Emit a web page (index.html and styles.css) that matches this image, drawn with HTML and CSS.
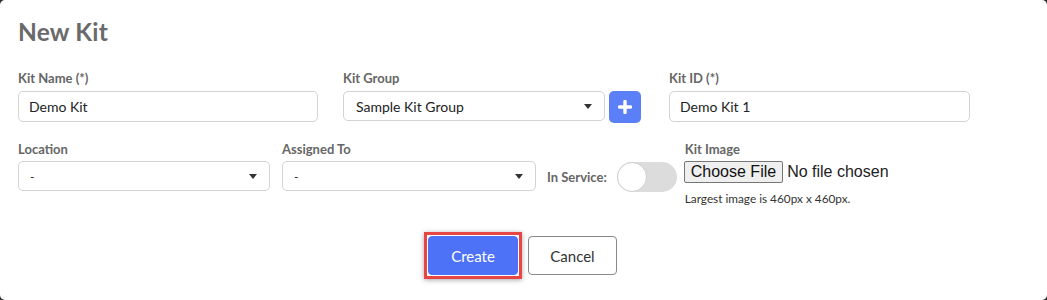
FILE: index.html
```html
<!DOCTYPE html>
<html>
<head>
<meta charset="utf-8">
<link rel="stylesheet" href="styles.css">
</head>
<body>
<div class="modal">
  <h1 class="title">New Kit</h1>
  <div class="row row1">
    <div class="field f-name">
      <label class="lbl">Kit Name (*)</label>
      <div class="input">Demo Kit</div>
    </div>
    <div class="field f-group">
      <label class="lbl">Kit Group</label>
      <div class="with-btn">
        <div class="select"><span>Sample Kit Group</span><span class="caret"></span></div>
        <div class="plus"><svg width="14" height="14" viewBox="0 0 14 14"><path d="M7 1.5v11M1.5 7h11" stroke="#fff" stroke-width="3.4" stroke-linecap="round"/></svg></div>
      </div>
    </div>
    <div class="field f-id">
      <label class="lbl">Kit ID (*)</label>
      <div class="input">Demo Kit 1</div>
    </div>
  </div>
  <div class="row row2">
    <div class="field f-loc">
      <label class="lbl">Location</label>
      <div class="select sm"><span>-</span><span class="caret"></span></div>
    </div>
    <div class="field f-assign">
      <label class="lbl">Assigned To</label>
      <div class="select sm"><span>-</span><span class="caret"></span></div>
    </div>
    <div class="service">
      <span class="lbl">In Service:</span>
      <div class="toggle"><div class="knob"></div></div>
    </div>
    <div class="field f-img">
      <label class="lbl">Kit Image</label>
      <div class="file"><span class="filebtn">Choose File</span><span class="filetxt">No file chosen</span></div>
      <div class="help">Largest image is 460px x 460px.</div>
    </div>
  </div>
  <div class="actions">
    <div class="hl"><button class="btn create">Create</button></div>
    <button class="btn cancel">Cancel</button>
  </div>
</div>
</body>
</html>
```
FILE: styles.css
```css
html { background: #2b2b2b; }
body { margin: 0; font-family: Lato, "Open Sans", sans-serif; }
.modal {
  background: #fff;
  width: 1047px;
  height: 300px;
  box-sizing: border-box;
  border-radius: 5px;
  padding: 18px 0 0 18px;
}
.title {
  margin: 0;
  font-size: 24.5px;
  font-weight: 700;
  color: #6a6a6a;
  line-height: 28px;
  letter-spacing: 0.2px;
}
.row { display: flex; }
.row1 { margin-top: 24px; }
.row2 { margin-top: 18px; }
.field { display: flex; flex-direction: column; }
.lbl {
  font-size: 13px;
  font-weight: 700;
  color: #666;
  line-height: 16px;
}
.field .lbl { margin-bottom: 5px; }
.input, .select {
  box-sizing: border-box;
  height: 31px;
  border: 1px solid #d3d3d3;
  border-radius: 5px;
  font-size: 14px;
  color: #222;
  padding: 0 10px;
  display: flex;
  align-items: center;
}
.select { justify-content: space-between; padding: 0 12px 0 12px; }
.caret {
  width: 0; height: 0;
  border-left: 4px solid transparent;
  border-right: 4px solid transparent;
  border-top: 5px solid #333;
}
.f-name { width: 300px; }
.f-group { margin-left: 25px; width: 298px; }
.f-id { margin-left: 28px; width: 301px; }
.with-btn { display: flex; align-items: flex-start; }
.with-btn .select { width: 262px; height: 30px; }
.plus {
  width: 32px; height: 32px;
  margin-left: 4px;
  background: #5a7ff7;
  border-radius: 5px;
  display: flex; align-items: center; justify-content: center;
}
.row2 .field .lbl { margin-bottom: 4px; }
.f-loc { width: 252px; }
.f-assign { width: 254px; margin-left: 12px; }
.select.sm { height: 30px; padding-left: 11px; }
.select.sm span:first-child { font-size: 12px; }
.service {
  margin-left: 11px;
  margin-top: 21px;
  display: flex;
  align-items: center;
  height: 30px;
}
.service .lbl { margin-right: 10px; }
.toggle {
  width: 60px; height: 30px;
  background: #dcdcdc;
  border-radius: 15px;
  position: relative;
}
.knob {
  position: absolute;
  left: 0; top: 0;
  width: 28px; height: 28px;
  border-radius: 50%;
  background: #fff;
  border: 1px solid #d0d0d0;
}
.f-img { margin-left: 7px; }
.f-img .lbl { margin-left: 1px; margin-bottom: 1px; }
.file { display: flex; align-items: center; font-family: "Liberation Sans", Arial, sans-serif; font-size: 16px; }
.filebtn {
  box-sizing: border-box;
  height: 22px;
  background: #efefef;
  border: 1px solid #767676;
  border-radius: 2px;
  padding: 0 6px;
  color: #111;
  line-height: 20px;
}
.filetxt { margin-left: 4px; color: #222; }
.help { font-size: 11.8px; color: #333; margin-top: 8px; margin-left: 1px; }
.actions {
  display: flex;
  justify-content: center;
  align-items: center;
  margin-top: 26px;
  margin-left: -24px;
}
.hl {
  border: 3px solid #e84545;
  padding: 1px;
  box-shadow: 0 1px 5px rgba(0,0,0,0.35);
}
.btn {
  font-family: Lato, sans-serif;
  font-size: 15px;
  border-radius: 4px;
  cursor: pointer;
  display: block;
}
.create {
  width: 90px; height: 39px;
  background: #4d72f8;
  color: #fff;
  border: 1px solid #4d72f8;
}
.cancel {
  margin-left: 6px;
  width: 89px; height: 39px;
  background: #fff;
  color: #333;
  border: 1px solid #888;
}
```
